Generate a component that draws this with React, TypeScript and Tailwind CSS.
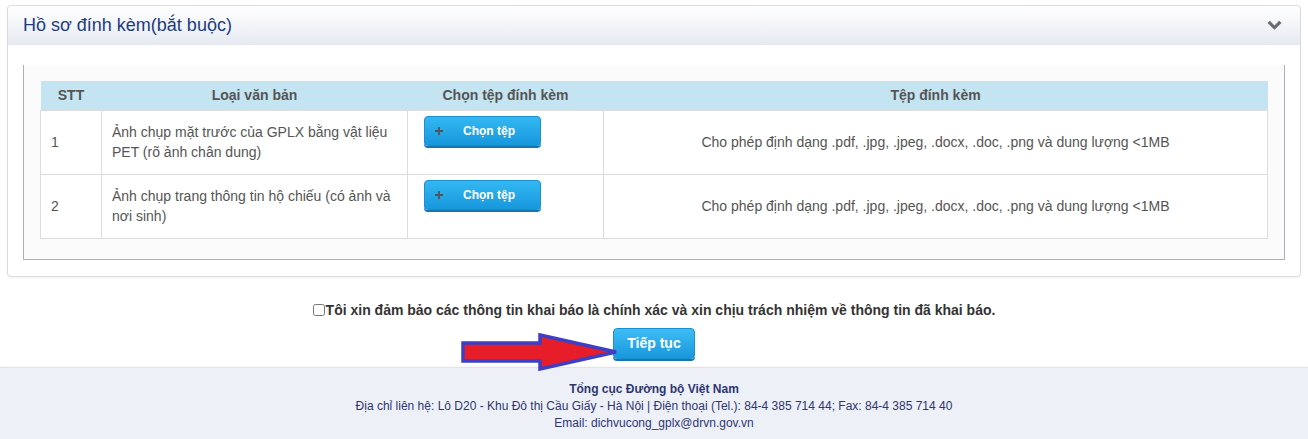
import React from "react";

const rows = [
  {
    stt: "1",
    name: "Ảnh chụp mặt trước của GPLX bằng vật liệu PET (rõ ảnh chân dung)",
  },
  {
    stt: "2",
    name: "Ảnh chụp trang thông tin hộ chiếu (có ảnh và nơi sinh)",
  },
];

const allowed =
  "Cho phép định dạng .pdf, .jpg, .jpeg, .docx, .doc, .png và dung lượng <1MB";

function ChevronDown() {
  return (
    <svg width="17" height="11" viewBox="0 0 17 11" aria-hidden="true">
      <path
        d="M1.5 3 L3.8 0.8 L8.5 5.4 L13.2 0.8 L15.5 3 L8.5 9.8 Z"
        fill="#6b6b6b"
      />
    </svg>
  );
}

function PlusIcon() {
  return (
    <svg width="8" height="8" viewBox="0 0 8 8" aria-hidden="true">
      <path d="M3 0 H5 V3 H8 V5 H5 V8 H3 V5 H0 V3 H3 Z" fill="#4d5863" />
    </svg>
  );
}

function PickButton() {
  return (
    <button
      type="button"
      className="flex h-[30px] w-[117px] items-center rounded-[4px] border border-[#1b8fcf] bg-gradient-to-b from-[#33b8f3] to-[#1797dc] pl-[10px] text-[12px] font-bold text-white shadow-[0_2px_0_#1677b0]"
    >
      <span className="mr-[20px] flex items-center">
        <PlusIcon />
      </span>
      <span>Chọn tệp</span>
    </button>
  );
}

function Arrow() {
  return (
    <svg
      width="160"
      height="40"
      viewBox="0 0 160 40"
      className="pointer-events-none absolute left-[-152px] top-[3px]"
      aria-hidden="true"
    >
      <polygon
        points="2,12 79,12 79,4 155,21 79,38 79,30 2,30"
        fill="#e71d2a"
        stroke="#3f3fc4"
        strokeWidth="3.5"
        strokeLinejoin="miter"
      />
    </svg>
  );
}

export default function App() {
  return (
    <div
      className="min-h-[439px] w-[1308px] bg-white"
      style={{ fontFamily: '"Liberation Sans", Arial, sans-serif' }}
    >
      <div className="px-[7px] pt-[5px]">
        <div className="rounded-[4px] border border-[#dcdcdc] bg-white shadow-[0_1px_2px_rgba(0,0,0,0.06)]">
          <div className="flex h-[39px] items-center justify-between rounded-t-[4px] border-b border-[#e4e8ee] bg-gradient-to-b from-white to-[#e6ebf2] pl-[15px] pr-[17px]">
            <h3 className="text-[18px] font-normal text-[#1e3b80]">Hồ sơ đính kèm(bắt buộc)</h3>
            <ChevronDown />
          </div>
          <div className="px-[15px] pb-[16px] pt-[20px]">
            <div className="border-x border-b border-[#a9afbd] bg-[#fbfbfb] px-[16px] pb-[20px] pt-[16px]">
              <table className="w-full border-collapse text-[14px] text-[#555]">
                <thead>
                  <tr className="h-[29px] bg-[#c5e4f2] font-bold">
                    <th className="w-[61px] text-center font-bold">STT</th>
                    <th className="w-[306px] text-center font-bold">Loại văn bản</th>
                    <th className="w-[196px] text-center font-bold">Chọn tệp đính kèm</th>
                    <th className="text-center font-bold">Tệp đính kèm</th>
                  </tr>
                </thead>
                <tbody className="bg-white">
                  {rows.map((r) => (
                    <tr key={r.stt} className="h-[64px]">
                      <td className="border border-[#dddddd] px-[10px] align-middle">{r.stt}</td>
                      <td className="border border-[#dddddd] px-[10px] align-middle leading-[20px]">
                        {r.name}
                      </td>
                      <td className="border border-[#dddddd] pl-[16px] pt-[5px] align-top">
                        <PickButton />
                      </td>
                      <td className="border border-[#dddddd] px-[10px] text-center align-middle">
                        {allowed}
                      </td>
                    </tr>
                  ))}
                </tbody>
              </table>
            </div>
          </div>
        </div>
      </div>

      <div className="flex flex-col items-center pt-[23px]">
        <label className="flex items-center text-[14px] font-bold text-[#333]">
          <input type="checkbox" className="mr-[1px] h-[12px] w-[12px]" />
          Tôi xin đảm bảo các thông tin khai báo là chính xác và xin chịu trách nhiệm về thông tin đã khai báo.
        </label>
        <div className="relative mt-[7px]">
          <button
            type="button"
            className="relative z-0 h-[31px] w-[82px] rounded-[4px] border border-[#1b8fcf] bg-gradient-to-b from-[#3dbdf5] to-[#1797dc] text-[14px] font-bold text-white shadow-[0_2px_0_#1677b0]"
          >
            Tiếp tục
          </button>
          <Arrow />
        </div>
      </div>

      <footer className="mt-[8px] border-t border-[#e2e4ec] bg-[#eef0f8] pb-[8px] pt-[13px] text-center text-[12px] leading-[17px] text-[#2d3670] shadow-[0_-1px_2px_rgba(0,0,0,0.04)]">
        <div className="font-bold">Tổng cục Đường bộ Việt Nam</div>
        <div>
          Địa chỉ liên hệ: Lô D20 - Khu Đô thị Cầu Giấy - Hà Nội | Điện thoại (Tel.): 84-4 385 714 44; Fax: 84-4 385 714 40
        </div>
        <div>Email: dichvucong_gplx@drvn.gov.vn</div>
      </footer>
    </div>
  );
}
